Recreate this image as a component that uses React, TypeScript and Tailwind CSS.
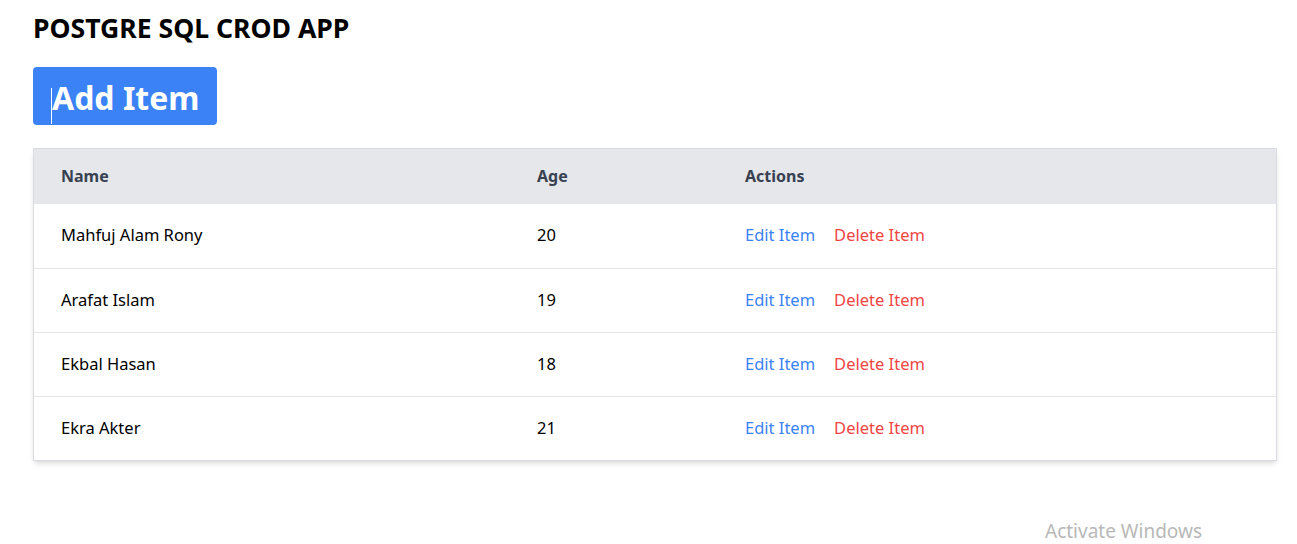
import React from "react";

type Person = { id: number; name: string; age: number };

const people: Person[] = [
  { id: 1, name: "Mahfuj Alam Rony", age: 20 },
  { id: 2, name: "Arafat Islam", age: 19 },
  { id: 3, name: "Ekbal Hasan", age: 18 },
  { id: 4, name: "Ekra Akter", age: 21 },
];

export default function App() {
  return (
    <div className="relative min-h-[544px] bg-white pl-[33px] pr-5 pt-3 font-['Noto_Sans',sans-serif] text-black">
      <h1 className="text-[26.6px] font-bold leading-8 mb-[23px]">POSTGRE SQL CROD APP</h1>

      <button className="relative h-[58px] rounded bg-[#3b82f6] pl-[19px] pr-[17px] pt-[3px] text-[32px] font-bold leading-10 text-white mb-[23px]">
        <span className="absolute left-[18px] top-[21px] h-[36px] w-px bg-white" />
        Add Item
      </button>

      <div className="border border-[#d9dbe0] shadow-md">
        <table className="w-full border-collapse text-left text-base">
          <thead className="bg-[#e5e7eb] text-[#374151] font-bold">
            <tr className="h-[55px]">
              <th className="w-[476px] pl-[27px] pr-7 pb-[2px]">Name</th>
              <th className="w-[208px] pl-[27px] pr-7 pb-[2px]">Age</th>
              <th className="pl-[27px] pr-7 pb-[2px]">Actions</th>
            </tr>
          </thead>
          <tbody>
            {people.map((p, i) => (
              <tr key={p.id} className={i > 0 ? "h-[64px] border-t border-[#e5e7eb]" : "h-[64px]"}>
                <td className="pl-[27px] pr-7 text-[16.5px]">{p.name}</td>
                <td className="pl-[27px] pr-7 text-[16.5px]">{p.age}</td>
                <td className="pl-[27px] pr-7 text-[16.5px]">
                  <button className="text-[#3b82f6] mr-[19px]">Edit Item</button>
                  <button className="text-[#ef4444]">Delete Item</button>
                </td>
              </tr>
            ))}
          </tbody>
        </table>
      </div>

      <div className="absolute left-[1045px] top-[517px] text-[19px] text-[#b8b8b8]">Activate Windows</div>
    </div>
  );
}
